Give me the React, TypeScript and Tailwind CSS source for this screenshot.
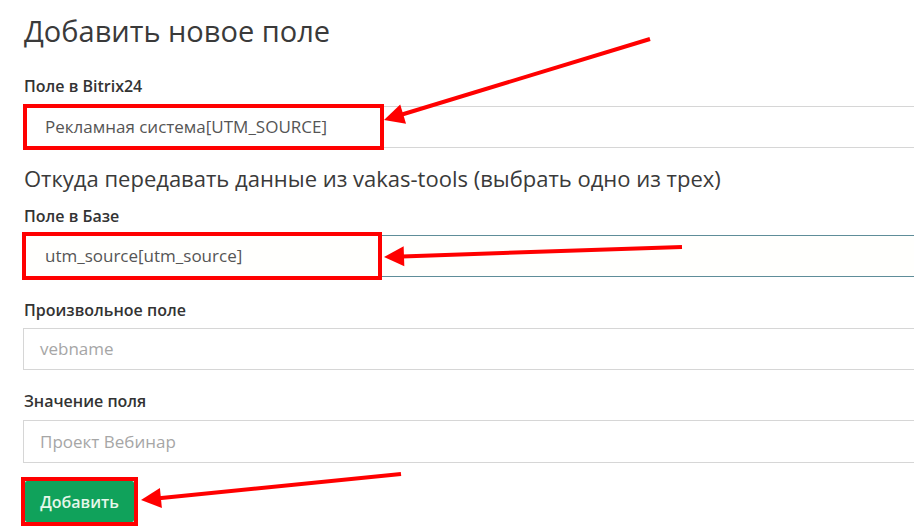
import React from 'react'

type Pt = [number, number]

const arrows: { tail: Pt; tip: Pt }[] = [
  { tail: [650, 39], tip: [384, 120] },
  { tail: [682, 247], tip: [384, 257] },
  { tail: [401, 474], tip: [141, 500] },
]

const Arrow: React.FC<{ tail: Pt; tip: Pt }> = ({ tail, tip }) => {
  const dx = tip[0] - tail[0]
  const dy = tip[1] - tail[1]
  const len = Math.hypot(dx, dy)
  const ux = dx / len
  const uy = dy / len
  const L = 20
  const W = 10
  const bx = tip[0] - ux * L
  const by = tip[1] - uy * L
  const pts = [
    `${tip[0]},${tip[1]}`,
    `${bx - uy * W},${by + ux * W}`,
    `${bx + uy * W},${by - ux * W}`,
  ].join(' ')
  return (
    <g>
      <line x1={tail[0]} y1={tail[1]} x2={bx + ux * 2} y2={by + uy * 2} stroke="#ff0000" strokeWidth={4} />
      <polygon points={pts} fill="#ff0000" />
    </g>
  )
}

const Label: React.FC<{ children: React.ReactNode; className?: string }> = ({ children, className }) => (
  <div className={`text-[16px] leading-[20px] font-semibold text-[#333] ${className ?? ''}`}>{children}</div>
)

export default function App() {
  return (
    <div
      className="relative w-[914px] h-[528px] overflow-hidden bg-white"
      style={{ fontFamily: '"Open Sans", "Noto Sans", sans-serif' }}
    >
      <div className="pl-6 pt-[13px] flex flex-col">
        <h1 className="text-[29px] leading-[36px] font-normal text-[#3a3a3a]">Добавить новое поле</h1>

        <Label className="mt-[27px]">Поле в Bitrix24</Label>
        <div className="relative mt-[10px]">
          <div className="h-[42px] w-[940px] border border-[#d6d6d6] bg-white flex items-center pl-5 text-[17px] text-[#555]">
            Рекламная система[UTM_SOURCE]
          </div>
          <div className="absolute -left-px -top-[2px] w-[361px] h-[46px] border-4 border-[#ff0000]" />
        </div>

        <div className="mt-4 text-[22px] leading-[28px] text-[#3a3a3a]">
          Откуда передавать данные из vakas-tools (выбрать одно из трех)
        </div>

        <Label className="mt-[14px]">Поле в Базе</Label>
        <div className="relative mt-[9px]">
          <div className="h-[42px] w-[940px] border border-[#5e8d99] bg-[#fffffd] flex items-center pl-5 text-[17px] text-[#555]">
            utm_source[utm_source]
          </div>
          <div className="absolute -left-[2px] -top-[3px] w-[360px] h-[48px] border-4 border-[#ff0000]" />
        </div>

        <Label className="mt-[23px]">Произвольное поле</Label>
        <div className="mt-[8px] h-[42px] w-[940px] -ml-px border border-[#d6d6d6] bg-white flex items-center pl-4 text-[17px] text-[#a6a6a6]">
          vebname
        </div>

        <Label className="mt-[21px]">Значение поля</Label>
        <div className="mt-[9px] h-[43px] w-[940px] -ml-px border border-[#d6d6d6] bg-white flex items-center pl-4 text-[17px] text-[#a6a6a6]">
          Проект Вебинар
        </div>

        <div className="mt-[14px] -ml-[3px] self-start border-4 border-[#ff0000]">
          <button className="h-[41px] w-[109px] bg-[#10a25b] rounded-[2px] text-[16px] font-semibold text-[#e6f7ea] flex items-center justify-center">
            Добавить
          </button>
        </div>
      </div>

      <svg className="absolute inset-0 pointer-events-none" width={914} height={528}>
        {arrows.map((a, i) => (
          <Arrow key={i} tail={a.tail} tip={a.tip} />
        ))}
      </svg>
    </div>
  )
}
